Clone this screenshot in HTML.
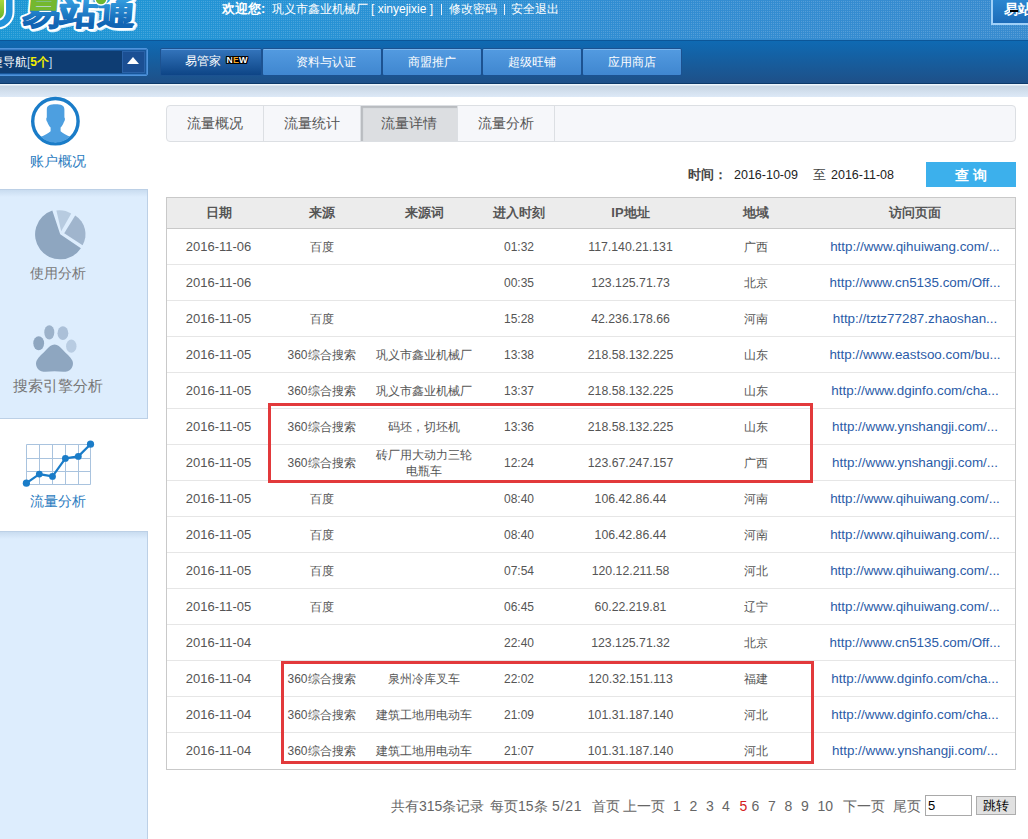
<!DOCTYPE html>
<html><head><meta charset="utf-8">
<style>
*{margin:0;padding:0;box-sizing:border-box}
html,body{width:1028px;height:839px;overflow:hidden;background:#fff;font-family:"Liberation Sans",sans-serif;font-size:13px;color:#555}
.a{position:absolute}
#hdr{left:0;top:0;width:1028px;height:40px;background:linear-gradient(90deg,#1b97d4 0%,#2593d5 25%,#318dd2 60%,#388bcf 100%)}
#dots{left:0;top:0;width:1028px;height:39px;background-image:conic-gradient(from 90deg at 1px 1px,rgba(255,255,255,.16) 0 25%,transparent 25% 100%);background-size:2px 2px}
#nav{left:0;top:40px;width:1028px;height:44px;background:linear-gradient(#0c5698 0,#0c5698 1px,#0f6ab3 1px,#1e5088 43px,#0d3a6a 43px)}
#strip{left:0;top:84px;width:1028px;height:13px;background:linear-gradient(#eef6fc 0,#eef6fc 1px,#c8d6e4 2px,#dde9f7 13px)}
.wel{color:#fff;font-size:12px;top:0px;height:18px;line-height:18px;white-space:nowrap}
.btn{top:48px;height:28px;color:#fff;font-size:12px;line-height:26px;text-align:center;border:1px solid #1c5291;border-radius:2px;background:linear-gradient(#7ab6ee 0,#7ab6ee 1px,#529ae0 1px,#3f86cf 27px)}
.side{left:0;width:148px;background:linear-gradient(#c9dcf0,#ddedfd 7px);border-right:1px solid #bcd0e6}
.sl{left:0;width:116px;text-align:center;font-size:14px;white-space:nowrap;height:18px;line-height:18px}
.tab{top:106px;height:35px;line-height:35px;text-align:center;font-size:14px;color:#555;border-right:1px solid #dcdfe3}
.th{top:198px;width:240px;height:30px;line-height:30px;text-align:center;font-weight:bold;color:#555;font-size:13px}
.td{width:240px;height:36px;line-height:36px;text-align:center;white-space:nowrap;color:#555;font-size:12px;font-weight:500}
.td2{width:240px;height:32px;line-height:16px;text-align:center;color:#555;font-size:12px;font-weight:500}
.rl{left:167px;width:848px;height:1px;background:#e6e6e6}
.lnk{color:#2b5ca8}
.red{border:3px solid #e2393b}
.pg{top:796px;height:20px;line-height:20px;font-size:14px;color:#666;white-space:nowrap}
</style></head><body>
<div id="hdr" class="a"></div>
<div id="dots" class="a"></div>
<!-- logo -->
<svg class="a" style="left:0;top:0" width="160" height="40" viewBox="0 0 160 40">
  <defs>
    <linearGradient id="lgt" x1="0" y1="-32" x2="0" y2="0" gradientUnits="userSpaceOnUse">
      <stop offset="0" stop-color="#3aa6e6"/><stop offset="1" stop-color="#1064b4"/>
    </linearGradient>
    <linearGradient id="lgj" x1="0" y1="0" x2="0" y2="30" gradientUnits="userSpaceOnUse">
      <stop offset="0" stop-color="#a8d83a"/><stop offset="0.7" stop-color="#5fae2a"/><stop offset="1" stop-color="#3a9ad8"/>
    </linearGradient>
    <clipPath id="lc"><rect x="0" y="0" width="160" height="10.5"/></clipPath>
  </defs>
  <path d="M-10 -2 H5 V13 Q5 20 -2 21.5 H-10 Z" fill="url(#lgj)"/>
  <path d="M9.3 -6 V12 A12.3 12.3 0 0 1 -3 24.3" fill="none" stroke="#fff" stroke-width="10.5"/>
  <path d="M9.3 -6 V12 A12.3 12.3 0 0 1 -3 24.3" fill="none" stroke="#2393da" stroke-width="6.5"/>
  <g transform="translate(22 23.5) scale(1.0 0.86) skewX(-4)" style="font-family:'Liberation Sans',sans-serif" font-size="38" font-weight="bold">
    <text x="0" y="0" fill="#d8f2ff" stroke="#d8f2ff" stroke-width="6" stroke-linejoin="round" transform="translate(1.5 1.5)">易站通</text>
    <text x="0" y="0" fill="#fff" stroke="#fff" stroke-width="6" stroke-linejoin="round">易站通</text>
    <text x="0" y="0" fill="url(#lgt)" stroke="url(#lgt)" stroke-width="1.6" stroke-linejoin="round">易站通</text>
  </g>
  <g clip-path="url(#lc)">
    <g transform="translate(22 23.5) scale(1.0 0.86) skewX(-4)" style="font-family:'Liberation Sans',sans-serif" font-size="38" font-weight="bold">
      <text x="0" y="0" fill="#74b82e" stroke="#74b82e" stroke-width="1.6" stroke-linejoin="round">易</text>
    </g>
  </g>
  <circle cx="101" cy="-1" r="6" fill="#6db832" stroke="#fff" stroke-width="1.5"/>
</svg>
<div class="a wel" style="left:222px;font-weight:bold;font-size:13px">欢迎您:</div>
<div class="a wel" style="left:272px">巩义市鑫业机械厂</div>
<div class="a wel" style="left:371px">[ xinyejixie ]</div>
<div class="a" style="left:441px;top:4px;width:1px;height:11px;background:#e8f0fa"></div>
<div class="a wel" style="left:449px">修改密码</div>
<div class="a" style="left:504px;top:4px;width:1px;height:11px;background:#e8f0fa"></div>
<div class="a wel" style="left:511px">安全退出</div>
<div class="a" style="left:991px;top:0;width:40px;height:25px;background:#9fd0f8"></div>
<div class="a" style="left:993px;top:0;width:40px;height:23px;background:linear-gradient(#2b86d0,#1c6bb8);color:#fff;font-weight:bold;font-size:14px;line-height:19px;padding-left:11px;white-space:nowrap">易站</div>
<div class="a" style="left:1010px;top:10px;width:8px;height:2px;background:#000"></div>

<div id="nav" class="a"></div>
<div id="strip" class="a"></div>
<!-- dropdown -->
<div class="a" style="left:-4px;top:48px;width:152px;height:28px;background:#17569a;border:1px solid #4f94dc;border-radius:2px;box-shadow:inset 0 0 0 1px #3c7fc8"></div>
<div class="a" style="left:0;top:51px;width:145px;height:22px;background:#0e3d73"></div>
<div class="a" style="left:122px;top:51px;width:23px;height:22px;background:#1b4f93;border:1px solid #2a62a8"></div>
<div class="a" style="left:127px;top:57px;width:0;height:0;border-left:6px solid transparent;border-right:6px solid transparent;border-bottom:7px solid #fff"></div>
<div class="a" style="left:-9px;top:53px;height:18px;line-height:18px;font-size:12px;color:#fff;white-space:nowrap">捷导航<span style="color:#bcd8f4">[</span><b style="color:#f4ee00">5个</b><span style="color:#bcd8f4">]</span></div>
<!-- nav buttons -->
<div class="a btn" style="left:160px;width:102px;background:linear-gradient(#5a9ae0 0,#5a9ae0 1px,#3273ba 1px,#0c4384 27px);border-color:#1c5291"></div>
<div class="a wel" style="left:185px;top:52px">易管家</div>
<div class="a" style="left:226.5px;top:55px;font-size:9px;font-weight:bold;color:#fff;line-height:10px;white-space:nowrap;text-shadow:1px 0 0 #000,-1px 0 0 #000,0 1px 0 #000,0 -1px 0 #000,1px 1px 0 #000,-1px -1px 0 #000,1px -1px 0 #000,-1px 1px 0 #000">N<span style="color:#f5a623">E</span>W</div>
<div class="a btn" style="left:262px;width:120px;padding-left:8px">资料与认证</div>
<div class="a btn" style="left:382px;width:100px">商盟推广</div>
<div class="a btn" style="left:482px;width:100px">超级旺铺</div>
<div class="a btn" style="left:582px;width:100px">应用商店</div>

<!-- sidebar -->
<div class="a side" style="top:189px;height:230px;border-top:1px solid #bcd0e6;border-bottom:1px solid #bcd0e6"></div>
<div class="a side" style="top:531px;height:320px;border-top:1px solid #bcd0e6"></div>

<svg class="a" style="left:0;top:90px" width="148" height="440" viewBox="0 90 148 440">
  <!-- user -->
  <circle cx="55.4" cy="121.2" r="22.7" fill="#fff" stroke="#1a7cc8" stroke-width="3.4"/>
  <clipPath id="cc"><circle cx="55.3" cy="121.2" r="21.3"/></clipPath>
  <g clip-path="url(#cc)" fill="#4d9fe0">
    <path d="M55.6 104.3 C60.8 104.3 64.4 105.3 64.4 109.5 V117.5 C65.2 118 65.1 120.8 64 121.8 C63.2 124.3 62 126.2 60.6 127.6 V131.2 C62.8 133.2 66.6 135.2 71 137 L84 142 V152 H27 V142 L40.2 137 C44.6 135.2 48.4 133.2 50.6 131.2 V127.6 C49.2 126.2 48 124.3 47.2 121.8 C46.1 120.8 46 118 46.8 117.5 V109.5 C46.8 105.3 50.4 104.3 55.6 104.3 Z"/>
  </g>
  <!-- pie -->
  <path d="M60.2 234.3 L80.9 248.2 A25 25 0 1 1 52.3 210.6 Z" fill="#8ea6c0"/>
  <path d="M61.2 231.3 L56.4 210.4 A21.5 21.5 0 0 1 71.2 213.6 Z" fill="#b7cbe0"/>
  <path d="M64.2 233.2 L75.2 215.6 A22 22 0 0 1 82.6 245.2 Z" fill="#a0b5cd"/>
  <!-- paw -->
  <ellipse cx="38.7" cy="343.2" rx="5.4" ry="7" fill="#8ea6c0"/>
  <ellipse cx="49.3" cy="332.4" rx="5" ry="7.2" fill="#9cb2ca"/>
  <ellipse cx="62.9" cy="333.2" rx="5.4" ry="6.9" fill="#abc0d8"/>
  <ellipse cx="71.3" cy="346.2" rx="5.2" ry="6.6" fill="#b8cce2"/>
  <path d="M54.6 344.4c-3.3 0-5.6 2.2-8.3 5.4-3.2 3.8-7.8 6.9-9.6 10.6-1.9 3.9.3 9.5 4.6 10.8 4.3 1.3 8.8 0 13.2 0 4.4 0 8.9 1.3 13.2 0 4.3-1.3 6.5-6.9 4.6-10.8-1.8-3.7-6.4-6.8-9.6-10.6-2.7-3.2-5-5.4-8.1-5.4z" fill="#8ea6c0"/>
  <!-- chart -->
  <g stroke="#a9c3de" stroke-width="1" fill="none">
    <path d="M26.5 444.5H90.5M26.5 458.5H90.5M26.5 471.5H90.5M26.5 484.5H90.5M26.5 444.5V484.5M39.5 444.5V484.5M52.5 444.5V484.5M65.5 444.5V484.5M78.5 444.5V484.5M90.5 444.5V484.5"/>
  </g>
  <polyline points="26.4,483.2 39.3,474.1 52.5,476.4 65.4,458.4 78.3,456.4 90.5,444.2" fill="none" stroke="#1a7cc8" stroke-width="2.2" stroke-linejoin="round"/>
  <g fill="#1a7cc8">
    <circle cx="26.4" cy="483.2" r="3.6"/><circle cx="39.3" cy="474.1" r="3.4"/><circle cx="52.5" cy="476.4" r="3.4"/><circle cx="65.4" cy="458.4" r="3.4"/><circle cx="78.3" cy="456.4" r="3.4"/><circle cx="90.5" cy="444.2" r="3.6"/>
  </g>
</svg>

<div class="a sl" style="top:152px;color:#2a7bc0">账户概况</div>
<div class="a sl" style="top:264px;color:#777">使用分析</div>
<div class="a sl" style="top:377px;color:#777;font-size:14.6px">搜索引擎分析</div>
<div class="a sl" style="top:492px;color:#2a7bc0">流量分析</div>

<!-- tabs -->
<div class="a" style="left:166px;top:105px;width:850px;height:37px;border:1px solid #dcdfe3;border-radius:4px;background:#f6f7fa"></div>
<div class="a tab" style="left:167px;width:97px">流量概况</div>
<div class="a tab" style="left:264px;width:97px">流量统计</div>
<div class="a tab" style="left:361px;width:97px;background:#dcdee1;box-shadow:inset 2px 2px 1px #b9bcc0">流量详情</div>
<div class="a tab" style="left:458px;width:97px">流量分析</div>

<!-- time row -->
<div class="a" style="left:688px;top:166px;line-height:18px;font-size:13px;color:#444;white-space:nowrap;font-weight:bold">时间：</div>
<div class="a" style="left:734px;top:166px;line-height:18px;font-size:12.5px;color:#222;white-space:nowrap">2016-10-09</div>
<div class="a" style="left:813px;top:166px;line-height:18px;font-size:13px;color:#444;white-space:nowrap">至</div>
<div class="a" style="left:831px;top:166px;line-height:18px;font-size:12.5px;color:#222;white-space:nowrap">2016-11-08</div>
<div class="a" style="left:926px;top:162px;width:90px;height:25px;background:#3cb0ec;color:#fff;font-size:14px;font-weight:bold;line-height:27px;padding-left:4px;text-align:center;letter-spacing:4px">查询</div>

<!-- table -->
<div class="a" style="left:166px;top:197px;width:850px;height:573px;border:1px solid #c9c9c9"></div>
<div class="a" style="left:167px;top:198px;width:848px;height:31px;background:#ececec;border-bottom:1px solid #c9c9c9"></div>
<div class="a th" style="left:98.5px">日期</div>
<div class="a th" style="left:201.5px">来源</div>
<div class="a th" style="left:304.0px">来源词</div>
<div class="a th" style="left:399.0px">进入时刻</div>
<div class="a th" style="left:510.5px">IP地址</div>
<div class="a th" style="left:636.0px">地域</div>
<div class="a th" style="left:795.0px">访问页面</div>
<div class="a rl" style="top:264px"></div>
<div class="a td" style="left:98.5px;top:229px;font-size:13px">2016-11-06</div>
<div class="a td" style="left:201.5px;top:229px;font-size:12px">百度</div>
<div class="a td" style="left:399.0px;top:229px;font-size:12px">01:32</div>
<div class="a td" style="left:510.5px;top:229px;font-size:12.3px">117.140.21.131</div>
<div class="a td" style="left:636.0px;top:229px;font-size:12px">广西</div>
<div class="a td lnk" style="left:795.0px;top:229px;font-size:13.4px">http://www.qihuiwang.com/...</div>
<div class="a rl" style="top:300px"></div>
<div class="a td" style="left:98.5px;top:265px;font-size:13px">2016-11-06</div>
<div class="a td" style="left:399.0px;top:265px;font-size:12px">00:35</div>
<div class="a td" style="left:510.5px;top:265px;font-size:12.3px">123.125.71.73</div>
<div class="a td" style="left:636.0px;top:265px;font-size:12px">北京</div>
<div class="a td lnk" style="left:795.0px;top:265px;font-size:13.4px">http://www.cn5135.com/Off...</div>
<div class="a rl" style="top:336px"></div>
<div class="a td" style="left:98.5px;top:301px;font-size:13px">2016-11-05</div>
<div class="a td" style="left:201.5px;top:301px;font-size:12px">百度</div>
<div class="a td" style="left:399.0px;top:301px;font-size:12px">15:28</div>
<div class="a td" style="left:510.5px;top:301px;font-size:12.3px">42.236.178.66</div>
<div class="a td" style="left:636.0px;top:301px;font-size:12px">河南</div>
<div class="a td lnk" style="left:795.0px;top:301px;font-size:13.4px">http://tztz77287.zhaoshan...</div>
<div class="a rl" style="top:372px"></div>
<div class="a td" style="left:98.5px;top:337px;font-size:13px">2016-11-05</div>
<div class="a td" style="left:201.5px;top:337px;font-size:12px">360综合搜索</div>
<div class="a td" style="left:304.0px;top:337px;font-size:12px">巩义市鑫业机械厂</div>
<div class="a td" style="left:399.0px;top:337px;font-size:12px">13:38</div>
<div class="a td" style="left:510.5px;top:337px;font-size:12.3px">218.58.132.225</div>
<div class="a td" style="left:636.0px;top:337px;font-size:12px">山东</div>
<div class="a td lnk" style="left:795.0px;top:337px;font-size:13.4px">http://www.eastsoo.com/bu...</div>
<div class="a rl" style="top:408px"></div>
<div class="a td" style="left:98.5px;top:373px;font-size:13px">2016-11-05</div>
<div class="a td" style="left:201.5px;top:373px;font-size:12px">360综合搜索</div>
<div class="a td" style="left:304.0px;top:373px;font-size:12px">巩义市鑫业机械厂</div>
<div class="a td" style="left:399.0px;top:373px;font-size:12px">13:37</div>
<div class="a td" style="left:510.5px;top:373px;font-size:12.3px">218.58.132.225</div>
<div class="a td" style="left:636.0px;top:373px;font-size:12px">山东</div>
<div class="a td lnk" style="left:795.0px;top:373px;font-size:13.4px">http://www.dginfo.com/cha...</div>
<div class="a rl" style="top:444px"></div>
<div class="a td" style="left:98.5px;top:409px;font-size:13px">2016-11-05</div>
<div class="a td" style="left:201.5px;top:409px;font-size:12px">360综合搜索</div>
<div class="a td" style="left:304.0px;top:409px;font-size:12px">码坯，切坯机</div>
<div class="a td" style="left:399.0px;top:409px;font-size:12px">13:36</div>
<div class="a td" style="left:510.5px;top:409px;font-size:12.3px">218.58.132.225</div>
<div class="a td" style="left:636.0px;top:409px;font-size:12px">山东</div>
<div class="a td lnk" style="left:795.0px;top:409px;font-size:13.4px">http://www.ynshangji.com/...</div>
<div class="a rl" style="top:480px"></div>
<div class="a td" style="left:98.5px;top:445px;font-size:13px">2016-11-05</div>
<div class="a td" style="left:201.5px;top:445px;font-size:12px">360综合搜索</div>
<div class="a td2" style="left:304.0px;top:446.5px">砖厂用大动力三轮<br>电瓶车</div>
<div class="a td" style="left:399.0px;top:445px;font-size:12px">12:24</div>
<div class="a td" style="left:510.5px;top:445px;font-size:12.3px">123.67.247.157</div>
<div class="a td" style="left:636.0px;top:445px;font-size:12px">广西</div>
<div class="a td lnk" style="left:795.0px;top:445px;font-size:13.4px">http://www.ynshangji.com/...</div>
<div class="a rl" style="top:516px"></div>
<div class="a td" style="left:98.5px;top:481px;font-size:13px">2016-11-05</div>
<div class="a td" style="left:201.5px;top:481px;font-size:12px">百度</div>
<div class="a td" style="left:399.0px;top:481px;font-size:12px">08:40</div>
<div class="a td" style="left:510.5px;top:481px;font-size:12.3px">106.42.86.44</div>
<div class="a td" style="left:636.0px;top:481px;font-size:12px">河南</div>
<div class="a td lnk" style="left:795.0px;top:481px;font-size:13.4px">http://www.qihuiwang.com/...</div>
<div class="a rl" style="top:552px"></div>
<div class="a td" style="left:98.5px;top:517px;font-size:13px">2016-11-05</div>
<div class="a td" style="left:201.5px;top:517px;font-size:12px">百度</div>
<div class="a td" style="left:399.0px;top:517px;font-size:12px">08:40</div>
<div class="a td" style="left:510.5px;top:517px;font-size:12.3px">106.42.86.44</div>
<div class="a td" style="left:636.0px;top:517px;font-size:12px">河南</div>
<div class="a td lnk" style="left:795.0px;top:517px;font-size:13.4px">http://www.qihuiwang.com/...</div>
<div class="a rl" style="top:588px"></div>
<div class="a td" style="left:98.5px;top:553px;font-size:13px">2016-11-05</div>
<div class="a td" style="left:201.5px;top:553px;font-size:12px">百度</div>
<div class="a td" style="left:399.0px;top:553px;font-size:12px">07:54</div>
<div class="a td" style="left:510.5px;top:553px;font-size:12.3px">120.12.211.58</div>
<div class="a td" style="left:636.0px;top:553px;font-size:12px">河北</div>
<div class="a td lnk" style="left:795.0px;top:553px;font-size:13.4px">http://www.qihuiwang.com/...</div>
<div class="a rl" style="top:624px"></div>
<div class="a td" style="left:98.5px;top:589px;font-size:13px">2016-11-05</div>
<div class="a td" style="left:201.5px;top:589px;font-size:12px">百度</div>
<div class="a td" style="left:399.0px;top:589px;font-size:12px">06:45</div>
<div class="a td" style="left:510.5px;top:589px;font-size:12.3px">60.22.219.81</div>
<div class="a td" style="left:636.0px;top:589px;font-size:12px">辽宁</div>
<div class="a td lnk" style="left:795.0px;top:589px;font-size:13.4px">http://www.qihuiwang.com/...</div>
<div class="a rl" style="top:660px"></div>
<div class="a td" style="left:98.5px;top:625px;font-size:13px">2016-11-04</div>
<div class="a td" style="left:399.0px;top:625px;font-size:12px">22:40</div>
<div class="a td" style="left:510.5px;top:625px;font-size:12.3px">123.125.71.32</div>
<div class="a td" style="left:636.0px;top:625px;font-size:12px">北京</div>
<div class="a td lnk" style="left:795.0px;top:625px;font-size:13.4px">http://www.cn5135.com/Off...</div>
<div class="a rl" style="top:696px"></div>
<div class="a td" style="left:98.5px;top:661px;font-size:13px">2016-11-04</div>
<div class="a td" style="left:201.5px;top:661px;font-size:12px">360综合搜索</div>
<div class="a td" style="left:304.0px;top:661px;font-size:12px">泉州冷库叉车</div>
<div class="a td" style="left:399.0px;top:661px;font-size:12px">22:02</div>
<div class="a td" style="left:510.5px;top:661px;font-size:12.3px">120.32.151.113</div>
<div class="a td" style="left:636.0px;top:661px;font-size:12px">福建</div>
<div class="a td lnk" style="left:795.0px;top:661px;font-size:13.4px">http://www.dginfo.com/cha...</div>
<div class="a rl" style="top:732px"></div>
<div class="a td" style="left:98.5px;top:697px;font-size:13px">2016-11-04</div>
<div class="a td" style="left:201.5px;top:697px;font-size:12px">360综合搜索</div>
<div class="a td" style="left:304.0px;top:697px;font-size:12px">建筑工地用电动车</div>
<div class="a td" style="left:399.0px;top:697px;font-size:12px">21:09</div>
<div class="a td" style="left:510.5px;top:697px;font-size:12.3px">101.31.187.140</div>
<div class="a td" style="left:636.0px;top:697px;font-size:12px">河北</div>
<div class="a td lnk" style="left:795.0px;top:697px;font-size:13.4px">http://www.dginfo.com/cha...</div>
<div class="a td" style="left:98.5px;top:733px;font-size:13px">2016-11-04</div>
<div class="a td" style="left:201.5px;top:733px;font-size:12px">360综合搜索</div>
<div class="a td" style="left:304.0px;top:733px;font-size:12px">建筑工地用电动车</div>
<div class="a td" style="left:399.0px;top:733px;font-size:12px">21:07</div>
<div class="a td" style="left:510.5px;top:733px;font-size:12.3px">101.31.187.140</div>
<div class="a td" style="left:636.0px;top:733px;font-size:12px">河北</div>
<div class="a td lnk" style="left:795.0px;top:733px;font-size:13.4px">http://www.ynshangji.com/...</div>
<div class="a red" style="left:268px;top:403px;width:545px;height:80px"></div>
<div class="a red" style="left:281px;top:661px;width:533px;height:103px"></div>

<!-- pagination -->
<div class="a pg" style="left:391px;color:#666">共有315条记录</div>
<div class="a pg" style="left:490px;color:#666">每页15条</div>
<div class="a pg" style="left:552px;color:#666;letter-spacing:0.8px">5/21</div>
<div class="a pg" style="left:592px;color:#666">首页</div>
<div class="a pg" style="left:623px;color:#666">上一页</div>
<div class="a pg" style="left:673px;color:#666">1</div>
<div class="a pg" style="left:689.5px;color:#666">2</div>
<div class="a pg" style="left:706px;color:#666">3</div>
<div class="a pg" style="left:722px;color:#666">4</div>
<div class="a pg" style="left:739.5px;color:#d42020">5</div>
<div class="a pg" style="left:751.5px;color:#666">6</div>
<div class="a pg" style="left:768px;color:#666">7</div>
<div class="a pg" style="left:784.5px;color:#666">8</div>
<div class="a pg" style="left:801px;color:#666">9</div>
<div class="a pg" style="left:817.5px;color:#666">10</div>
<div class="a pg" style="left:842.5px;color:#666">下一页</div>
<div class="a pg" style="left:892.5px;color:#666">尾页</div>
<div class="a" style="left:925px;top:795px;width:47px;height:21px;border:1px solid #a9a9a9;background:#fff;font-size:13px;line-height:19px;padding-left:2px;color:#000">5</div>
<div class="a" style="left:976px;top:796px;width:40px;height:19px;border:1px solid #adadad;background:#e1e1e1;font-size:13px;line-height:17px;text-align:center;color:#000">跳转</div>
</body></html>
